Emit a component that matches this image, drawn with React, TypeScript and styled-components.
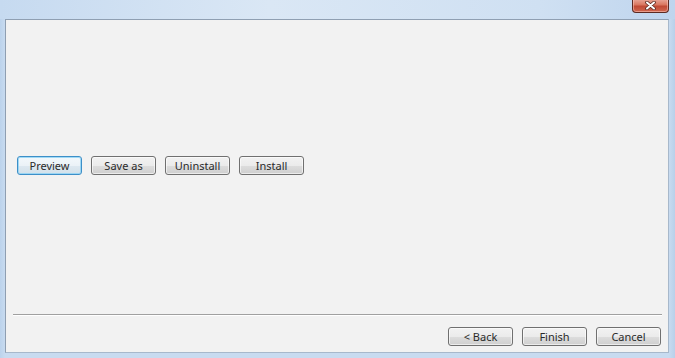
import React from 'react';
import styled, { createGlobalStyle } from 'styled-components';

const GlobalStyle = createGlobalStyle`
  html, body {
    margin: 0;
    padding: 0;
    width: 675px;
    height: 358px;
    overflow: hidden;
  }
  body {
    font-family: "Noto Sans", "DejaVu Sans", sans-serif;
    font-size: 11px;
    color: #1e1e1e;
  }
`;

const Window = styled.div`
  width: 675px;
  height: 358px;
  display: flex;
  flex-direction: column;
  background: linear-gradient(180deg, #c9dcf1 0%, #bfd4ec 40%, #c4d8ee 100%);
  box-sizing: border-box;
`;

const TitleBar = styled.div`
  height: 19px;
  display: flex;
  justify-content: flex-end;
  padding-right: 6px;
  background: linear-gradient(90deg, #c6daf0 0%, #dae7f5 40%, #cfe0f2 80%, #bfd5ee 100%);
`;

const CloseButton = styled.div`
  width: 35px;
  height: 13px;
  margin-top: -1px;
  border: 1px solid #5c2a22;
  border-top: none;
  border-radius: 0 0 4px 4px;
  background: linear-gradient(180deg, #e9a99b 0%, #d9765f 45%, #c04a35 55%, #d0674f 100%);
  display: flex;
  align-items: center;
  justify-content: center;
  box-shadow: inset 0 0 0 1px rgba(255, 210, 200, 0.5);
`;

const Middle = styled.div`
  flex: 1;
  display: flex;
  padding: 0 6px 5px 5px;
  background: linear-gradient(90deg, #bcd3ec 0px, #c8dbf0 5px, #c8dbf0 calc(100% - 6px), #b8d0ea 100%);
`;

const Client = styled.div`
  flex: 1;
  display: flex;
  flex-direction: column;
  background: #f2f2f2;
  border: 1px solid #8f9fb2;
  border-right-color: #a7b8cb;
  border-bottom-color: #a7b8cb;
`;

const Main = styled.div`
  flex: 1;
  padding: 136px 0 0 11px;
`;

const ButtonRow = styled.div<{ $justify?: string }>`
  display: flex;
  gap: 9px;
  justify-content: ${(p) => p.$justify || 'flex-start'};
`;

const Separator = styled.div`
  height: 1px;
  margin: 0 6px 0 7px;
  background: #a0a0a0;
  border-bottom: 1px solid #ffffff;
`;

const Footer = styled.div`
  padding: 11px 7px 6px 0;
`;

const Button = styled.div<{ $focused?: boolean }>`
  width: 65px;
  height: 19px;
  box-sizing: border-box;
  border: 1px solid ${(p) => (p.$focused ? '#3d8fc8' : '#707070')};
  border-radius: 3px;
  display: flex;
  align-items: center;
  justify-content: center;
  font-size: 11px;
  line-height: 1;
  color: #2a2a2a;
  background: ${(p) =>
    p.$focused
      ? 'linear-gradient(180deg, #f3f8fb 0%, #ebf2f7 50%, #dde8f0 51%, #d3e1ea 100%)'
      : 'linear-gradient(180deg, #f2f2f2 0%, #ebebeb 50%, #dddddd 51%, #cfcfcf 100%)'};
  box-shadow: inset 0 0 0 1px ${(p) => (p.$focused ? 'rgba(140,210,245,0.8)' : 'rgba(255,255,255,0.6)')};
`;

const CloseGlyph = () => (
  <svg width="11" height="9" viewBox="0 0 11 9">
    <path d="M2 1.5 L9 7.5 M9 1.5 L2 7.5" stroke="#5a2a22" strokeWidth="3.6" strokeLinecap="round" />
    <path d="M2 1.5 L9 7.5 M9 1.5 L2 7.5" stroke="#ffffff" strokeWidth="2" strokeLinecap="round" />
  </svg>
);

export default function App() {
  return (
    <>
      <GlobalStyle />
      <Window>
        <TitleBar>
          <CloseButton>
            <CloseGlyph />
          </CloseButton>
        </TitleBar>
        <Middle>
          <Client>
            <Main>
              <ButtonRow>
                <Button $focused>Preview</Button>
                <Button>Save as</Button>
                <Button>Uninstall</Button>
                <Button>Install</Button>
              </ButtonRow>
            </Main>
            <Separator />
            <Footer>
              <ButtonRow $justify="flex-end">
                <Button>&lt; Back</Button>
                <Button>Finish</Button>
                <Button>Cancel</Button>
              </ButtonRow>
            </Footer>
          </Client>
        </Middle>
      </Window>
    </>
  );
}
